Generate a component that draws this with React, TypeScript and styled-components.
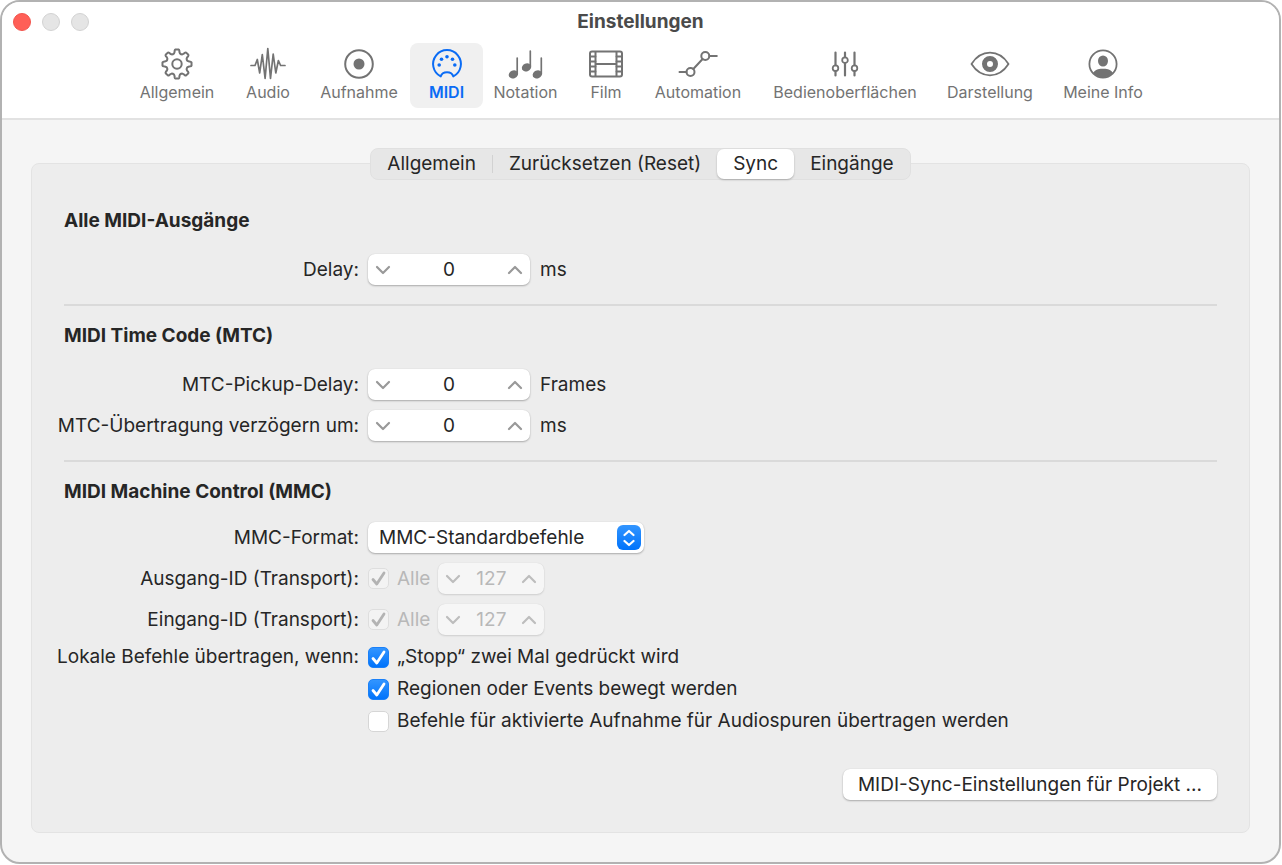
import React, { useState } from "react";
import styled, { createGlobalStyle, css } from "styled-components";

const GlobalStyle = createGlobalStyle`
  *, *::before, *::after { box-sizing: border-box; }
  body { margin: 0; background: #fff; }
  body, button, input, select {
    font-family: Inter, "Liberation Sans", sans-serif;
    font-size: 19px;
    line-height: 24px;
    color: #262626;
  }
  button, input, select { border: 0; margin: 0; padding: 0; background: none; }
`;

const Window = styled.main`
  display: flex;
  flex-direction: column;
  min-height: calc(100vh - 1px);
  margin-right: 1px;
  border: 2px solid #b2b2b2;
  border-radius: 20px;
  background: #f5f5f5;
  overflow: hidden;
`;

const Toolbar = styled.header`
  display: flex;
  flex-direction: column;
  gap: 9px;
  padding: 8px 0 10px;
  background: #fff;
  border-bottom: 2px solid #e2e2e2;
`;

const TitleBar = styled.div`
  display: grid;
  grid-template-columns: 1fr auto 1fr;
  align-items: center;
  padding: 0 11px;
`;

const Lights = styled.div`
  display: flex;
  gap: 11px;
`;

const Light = styled.button<{ $close?: boolean }>`
  width: 18px;
  height: 18px;
  border-radius: 50%;
  border: 1px solid ${(p) => (p.$close ? "#f2544d" : "#d2d2d2")};
  background: ${(p) => (p.$close ? "#ff5f57" : "#e5e5e5")};
`;

const Title = styled.h1`
  margin: 0;
  font-size: 19px;
  line-height: 24px;
  font-weight: 700;
  color: #4a4a4a;
`;

const Panes = styled.nav`
  display: grid;
  grid-template-columns: 102px 80px 102px 73px 85px 76px 108px 186px 104px 122px;
  justify-content: center;
  padding-left: 9px;
`;

const Pane = styled.button<{ $active?: boolean }>`
  display: flex;
  flex-direction: column;
  align-items: center;
  height: 65px;
  padding-top: 3px;
  border-radius: 8px;
  font-size: 16px;
  line-height: 20px;
  white-space: nowrap;
  color: #737373;
  ${(p) =>
    p.$active &&
    css`
      background: #f0f0f0;
      color: #0a6cf5;
      font-weight: 600;
    `}
`;

const Body = styled.div`
  flex: 1;
  padding: 43px 29px 29px;
  display: flex;
`;

const Panel = styled.section`
  flex: 1;
  display: flex;
  flex-direction: column;
  padding: 0 32px 32px;
  border: 1px solid #e3e3e3;
  border-radius: 8px;
  background: #ededed;
`;

const Tabs = styled.div`
  align-self: center;
  display: flex;
  margin-top: -16px;
  border: 1px solid #e0e0e0;
  border-radius: 8px;
  background: #e7e7e7;
`;

const Tab = styled.button<{ $active?: boolean }>`
  height: 30px;
  padding: 0 16px;
  border-radius: 7px;
  ${(p) =>
    p.$active &&
    css`
      background: #fff;
      box-shadow: 0 1px 2px rgba(0, 0, 0, 0.25);
    `}
`;

const TabRule = styled.span`
  width: 1px;
  height: 18px;
  align-self: center;
  background: #d2d2d2;
`;

const Group = styled.section`
  padding: 18px 0 19px;
  & + & { border-top: 2px solid #dadada; }
  &:first-of-type { padding-top: 29px; }
  &:last-of-type { padding-bottom: 0; }
`;

const Heading = styled.h2<{ $tight?: boolean }>`
  margin: 0 0 ${(p) => (p.$tight ? 18 : 21)}px;
  font-size: 19px;
  line-height: 24px;
  font-weight: 700;
`;

const Rows = styled.div`
  display: flex;
  flex-direction: column;
  gap: 10px;
`;

const Row = styled.div<{ $top?: boolean }>`
  display: grid;
  grid-template-columns: 295px 1fr;
  column-gap: 9px;
  align-items: ${(p) => (p.$top ? "start" : "center")};
  margin-top: ${(p) => (p.$top ? 6 : 0)}px;
`;

const labelText = css`
  text-align: right;
  white-space: nowrap;
  justify-self: end;
`;
const Label = styled.label`${labelText}`;
const GroupLabel = styled.span`
  ${labelText}
  line-height: 32px;
`;

const Controls = styled.div<{ $tight?: boolean }>`
  display: flex;
  align-items: center;
  gap: ${(p) => (p.$tight ? 8 : 10)}px;
`;

const StepperBox = styled.div<{ $small?: boolean; $disabled?: boolean }>`
  display: flex;
  align-items: center;
  width: ${(p) => (p.$small ? 106 : 162)}px;
  height: 31px;
  border-radius: 7px;
  background: ${(p) => (p.$disabled ? "#f6f6f6" : "#fff")};
  box-shadow: 0 1px 2px rgba(0, 0, 0, ${(p) => (p.$disabled ? 0.12 : 0.28)}),
    0 0 1px rgba(0, 0, 0, 0.12);
  color: ${(p) => (p.$disabled ? "#bdbdbd" : "#999")};
`;

const StepButton = styled.button`
  display: flex;
  justify-content: center;
  align-items: center;
  width: 30px;
  height: 31px;
  color: inherit;
`;

const StepInput = styled.input`
  flex: 1;
  min-width: 0;
  text-align: center;
  &:disabled { color: #b8b8b8; }
`;

const SelectBox = styled.div`
  display: grid;
  grid-template-columns: 1fr 24px;
  align-items: center;
  width: 276px;
  height: 31px;
  padding-right: 3px;
  border-radius: 7px;
  background: #fff;
  box-shadow: 0 1px 2px rgba(0, 0, 0, 0.28), 0 0 1px rgba(0, 0, 0, 0.12);
`;

const Select = styled.select`
  grid-area: 1 / 1 / 2 / 3;
  height: 31px;
  padding-left: 11px;
  appearance: none;
`;

const SelectBadge = styled.span`
  grid-area: 1 / 2;
  display: flex;
  justify-content: center;
  align-items: center;
  width: 24px;
  height: 25px;
  border-radius: 6px;
  background: linear-gradient(#3295ff, #0073fb);
  pointer-events: none;
`;

const CheckLabel = styled.label<{ $muted?: boolean }>`
  display: flex;
  align-items: center;
  gap: 8px;
  height: ${(p) => (p.$muted ? 31 : 32)}px;
  color: ${(p) => (p.$muted ? "#b8b8b8" : "inherit")};
`;

const CheckSlot = styled.span`
  display: grid;
  place-items: center;
  & > * { grid-area: 1 / 1; }
  & > svg { pointer-events: none; visibility: hidden; }
  & > input:checked + svg { visibility: visible; }
`;

const Checkbox = styled.input`
  appearance: none;
  width: 21px;
  height: 21px;
  border: 1px solid #d6d6d6;
  border-radius: 5px;
  background: #fff;
  &:checked {
    border-color: #1a80f8;
    background: linear-gradient(#3295ff, #0073fb);
  }
  &:disabled {
    border-color: #dedede;
    background: #f3f3f3;
  }
`;

const Footer = styled.footer`
  display: flex;
  justify-content: flex-end;
  margin-top: auto;
  padding-top: 24px;
`;

const PushButton = styled.button`
  height: 31px;
  padding: 0 15px;
  border-radius: 7px;
  background: #fff;
  box-shadow: 0 1px 2px rgba(0, 0, 0, 0.28), 0 0 1px rgba(0, 0, 0, 0.12);
`;

function Icon({ children }: { children: React.ReactNode }) {
  return (
    <svg width="44" height="36" viewBox="-22 -18 44 36" fill="none" stroke="currentColor" strokeWidth="2" strokeLinecap="round" strokeLinejoin="round" aria-hidden="true">
      {children}
    </svg>
  );
}

const gearPoint = (radius: number, degrees: number) => {
  const a = (degrees * Math.PI) / 180;
  return `${(radius * Math.sin(a)).toFixed(2)} ${(-radius * Math.cos(a)).toFixed(2)}`;
};
const gearPath =
  Array.from({ length: 8 }, (_, i) => {
    const a = i * 45;
    return `${i ? "L" : "M"}${gearPoint(11, a - 16)}Q${gearPoint(11.8, a - 12)} ${gearPoint(12.6, a - 11)}L${gearPoint(13.6, a - 10)}Q${gearPoint(14.4, a - 9)} ${gearPoint(14.6, a - 6)}L${gearPoint(14.6, a + 6)}Q${gearPoint(14.4, a + 9)} ${gearPoint(13.6, a + 10)}L${gearPoint(12.6, a + 11)}Q${gearPoint(11.8, a + 12)} ${gearPoint(11, a + 16)}Q${gearPoint(10.4, a + 22.5)} ${gearPoint(11, a + 29)}`;
  }).join("") + "Z";

const sprockets = [-8, -3, 2, 7];

const panes = [
  {
    name: "Allgemein",
    icon: (
      <>
        <path d={gearPath} />
        <circle r="4.7" />
      </>
    ),
  },
  {
    name: "Audio",
    icon: <path d="M-17 1.5h4L-10.7-4.5-8.3 9-5.7-9.5-2.9 14.5-.2-15.5 2.5 14.5 5.2-10 7.8 9 10.4-3.5 12.6 1.5H17" strokeWidth="1.7" />,
  },
  {
    name: "Aufnahme",
    icon: (
      <>
        <circle r="13.8" />
        <circle r="5.5" fill="currentColor" stroke="none" />
      </>
    ),
  },
  {
    name: "MIDI",
    icon: (
      <>
        <path d="M-6.3 12.4A13.9 13.9 0 1 1 6.3 12.4C4.600 6.800-4.600 6.800-6.3 12.4Z" />
        <g fill="currentColor" stroke="none">
          <circle cx="-7.8" cy="1" r="1.8" />
          <circle cx="-5.5" cy="-4.7" r="1.8" />
          <circle cx="0" cy="-7.2" r="1.8" />
          <circle cx="5.5" cy="-4.7" r="1.8" />
          <circle cx="7.8" cy="1" r="1.8" />
        </g>
      </>
    ),
  },
  {
    name: "Notation",
    icon: (
      <>
        <path d="M-8.8 10V-6M4.3 3V-13M15.3 10V-6" strokeWidth="1.7" />
        <g fill="currentColor" stroke="none">
          <ellipse cx="-12.6" cy="10.4" rx="4.8" ry="3.9" transform="rotate(-24 -12.6 10.4)" />
          <ellipse cx=".5" cy="3.4" rx="4.8" ry="3.9" transform="rotate(-24 .5 3.4)" />
          <ellipse cx="11.3" cy="10.4" rx="4.8" ry="3.9" transform="rotate(-24 11.3 10.4)" />
        </g>
      </>
    ),
  },
  {
    name: "Film",
    icon: (
      <>
        <rect x="-16" y="-12.5" width="32" height="25" rx="2" />
        <path d="M-10.5-12V12M10.5-12V12M-10 0H10" />
        {sprockets.map((y) => (
          <path key={y} d={`M-15.5 ${y + 0.5}h5M10.5 ${y + 0.5}h5`} strokeWidth="1.8" />
        ))}
      </>
    ),
  },
  {
    name: "Automation",
    icon: (
      <>
        <circle cx="-7.5" cy="8" r="4" />
        <circle cx="7.3" cy="-8" r="4" />
        <path d="M-18.5 8h7M11.3-8h7.5M-4.7 5 4.6-5" />
      </>
    ),
  },
  {
    name: "Bedienoberflächen",
    icon: (
      <>
        <path d="M-9.5-11.5V1.2M-9.5 7.2V11.5M0-11.5V-6.8M0-.8V11.5M9.5-11.5V1.2M9.5 7.2V11.5" strokeWidth="2.2" />
        <circle cx="-9.5" cy="4.2" r="2.8" strokeWidth="1.8" />
        <circle cy="-3.8" r="2.8" strokeWidth="1.8" />
        <circle cx="9.5" cy="4.2" r="2.8" strokeWidth="1.8" />
      </>
    ),
  },
  {
    name: "Darstellung",
    icon: (
      <>
        <path d="M-18.5 0C-14-7-7.5-11.3 0-11.3S14-7 18.5 0C14 7 7.5 11.3 0 11.3S-14 7-18.5 0Z" strokeWidth="1.8" />
        <circle r="5.5" strokeWidth="5" />
      </>
    ),
  },
  {
    name: "Meine Info",
    icon: (
      <>
        <circle r="13.6" strokeWidth="1.8" />
        <g fill="currentColor" stroke="none">
          <ellipse cy="-3" rx="5" ry="5.6" />
          <path d="M-10 9C-7 5-3 4.8 0 4.8S7 5 10 9A13.6 13.6 0 0 1-10 9Z" />
        </g>
      </>
    ),
  },
];

function Chevron({ up }: { up?: boolean }) {
  return (
    <svg width="16" height="10" viewBox="0 0 16 10" fill="none" stroke="currentColor" strokeWidth="2.2" strokeLinecap="round" strokeLinejoin="round" aria-hidden="true">
      <path d={up ? "M2 8 8 2l6 6" : "M2 2l6 6 6-6"} />
    </svg>
  );
}

interface StepperProps {
  id?: string;
  name: string;
  initial: number;
  small?: boolean;
  disabled?: boolean;
}

function Stepper({ id, name, initial, small, disabled }: StepperProps) {
  const [value, setValue] = useState(initial);
  return (
    <StepperBox $small={small} $disabled={disabled}>
      <StepButton type="button" aria-label={`${name} verringern`} disabled={disabled} onClick={() => setValue(value - 1)}>
        <Chevron />
      </StepButton>
      <StepInput id={id} aria-label={name} inputMode="numeric" value={value} disabled={disabled} onChange={(e) => setValue(Number(e.target.value) || 0)} />
      <StepButton type="button" aria-label={`${name} erhöhen`} disabled={disabled} onClick={() => setValue(value + 1)}>
        <Chevron up />
      </StepButton>
    </StepperBox>
  );
}

interface CheckProps {
  children: string;
  checked?: boolean;
  disabled?: boolean;
}

function Check({ children, checked, disabled }: CheckProps) {
  return (
    <CheckLabel $muted={disabled}>
      <CheckSlot>
        <Checkbox type="checkbox" defaultChecked={checked} disabled={disabled} />
        <svg width="15" height="15" viewBox="0 0 15 15" fill="none" stroke={disabled ? "#b3b3b3" : "#fff"} strokeWidth="2.8" strokeLinecap="round" strokeLinejoin="round" aria-hidden="true">
          <path d="M2 8.5 5.8 13 13 2" />
        </svg>
      </CheckSlot>
      {children}
    </CheckLabel>
  );
}

export default function App() {
  return (
    <>
      <GlobalStyle />
      <Window>
        <Toolbar>
          <TitleBar>
            <Lights>
              <Light $close type="button" aria-label="Schließen" />
              <Light type="button" aria-label="Minimieren" disabled />
              <Light type="button" aria-label="Zoomen" disabled />
            </Lights>
            <Title>Einstellungen</Title>
          </TitleBar>
          <Panes>
            {panes.map(({ name, icon }) => (
              <Pane key={name} type="button" $active={name === "MIDI"}>
                <Icon>{icon}</Icon>
                {name}
              </Pane>
            ))}
          </Panes>
        </Toolbar>
        <Body>
          <Panel>
            <Tabs role="tablist">
              <Tab type="button" role="tab">Allgemein</Tab>
              <TabRule />
              <Tab type="button" role="tab">Zurücksetzen (Reset)</Tab>
              <Tab type="button" role="tab" aria-selected="true" $active>Sync</Tab>
              <Tab type="button" role="tab">Eingänge</Tab>
            </Tabs>
            <Group>
              <Heading>Alle MIDI-Ausgänge</Heading>
              <Row>
                <Label htmlFor="delay">Delay:</Label>
                <Controls>
                  <Stepper id="delay" name="Delay" initial={0} />
                  <span>ms</span>
                </Controls>
              </Row>
            </Group>
            <Group>
              <Heading>MIDI Time Code (MTC)</Heading>
              <Rows>
                <Row>
                  <Label htmlFor="pickup">MTC-Pickup-Delay:</Label>
                  <Controls>
                    <Stepper id="pickup" name="MTC-Pickup-Delay" initial={0} />
                    <span>Frames</span>
                  </Controls>
                </Row>
                <Row>
                  <Label htmlFor="transmit">MTC-Übertragung verzögern um:</Label>
                  <Controls>
                    <Stepper id="transmit" name="MTC-Übertragung verzögern um" initial={0} />
                    <span>ms</span>
                  </Controls>
                </Row>
              </Rows>
            </Group>
            <Group>
              <Heading $tight>MIDI Machine Control (MMC)</Heading>
              <Rows>
                <Row>
                  <Label htmlFor="format">MMC-Format:</Label>
                  <SelectBox>
                    <Select id="format">
                      <option>MMC-Standardbefehle</option>
                    </Select>
                    <SelectBadge>
                      <svg width="12" height="18" viewBox="0 0 12 18" fill="none" stroke="#fff" strokeWidth="2.2" strokeLinecap="round" strokeLinejoin="round" aria-hidden="true">
                        <path d="M1.5 6 6 2l4.5 4M1.5 12 6 16l4.5-4" />
                      </svg>
                    </SelectBadge>
                  </SelectBox>
                </Row>
                <Row>
                  <Label htmlFor="out-id">Ausgang-ID (Transport):</Label>
                  <Controls $tight>
                    <Check checked disabled>Alle</Check>
                    <Stepper id="out-id" name="Ausgang-ID" initial={127} small disabled />
                  </Controls>
                </Row>
                <Row>
                  <Label htmlFor="in-id">Eingang-ID (Transport):</Label>
                  <Controls $tight>
                    <Check checked disabled>Alle</Check>
                    <Stepper id="in-id" name="Eingang-ID" initial={127} small disabled />
                  </Controls>
                </Row>
              </Rows>
              <Row $top role="group" aria-labelledby="local">
                <GroupLabel id="local">Lokale Befehle übertragen, wenn:</GroupLabel>
                <div>
                  <Check checked>„Stopp“ zwei Mal gedrückt wird</Check>
                  <Check checked>Regionen oder Events bewegt werden</Check>
                  <Check>Befehle für aktivierte Aufnahme für Audiospuren übertragen werden</Check>
                </div>
              </Row>
            </Group>
            <Footer>
              <PushButton type="button">MIDI-Sync-Einstellungen für Projekt ...</PushButton>
            </Footer>
          </Panel>
        </Body>
      </Window>
    </>
  );
}
